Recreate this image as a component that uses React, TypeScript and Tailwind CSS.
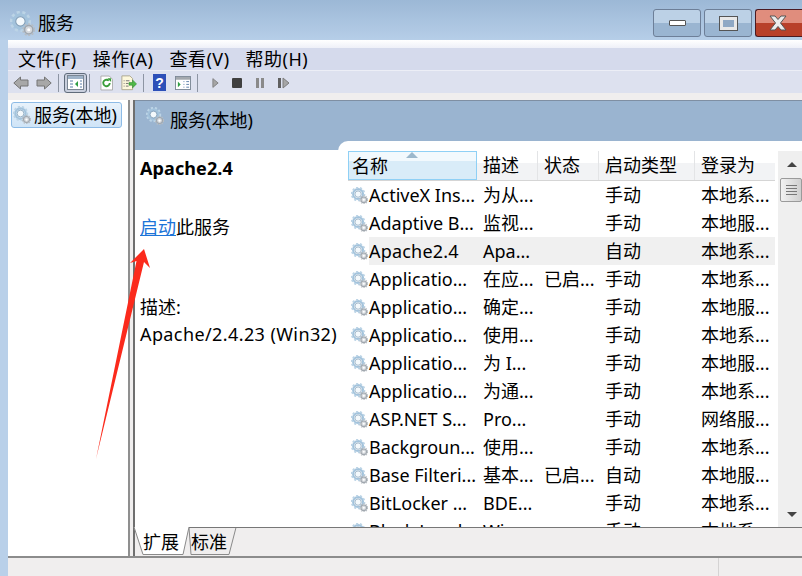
import React from 'react';

const rows = [
	['ActiveX Ins...', '为从...', '', '手动', '本地系...'],
	['Adaptive B...', '监视...', '', '手动', '本地服...'],
	['Apache2.4', 'Apa...', '', '自动', '本地系...'],
	['Applicatio...', '在应...', '已启...', '手动', '本地系...'],
	['Applicatio...', '确定...', '', '手动', '本地服...'],
	['Applicatio...', '使用...', '', '手动', '本地系...'],
	['Applicatio...', '为 I...', '', '手动', '本地服...'],
	['Applicatio...', '为通...', '', '手动', '本地系...'],
	['ASP.NET S...', 'Pro...', '', '手动', '网络服...'],
	['Backgroun...', '使用...', '', '手动', '本地系...'],
	['Base Filteri...', '基本...', '已启...', '自动', '本地服...'],
	['BitLocker ...', 'BDE...', '', '手动', '本地系...'],
	['Block Level...', 'Wi...', '', '手动', '本地系...'],
];

const Gear: React.FC<{ size?: number }> = ({ size = 18 }) => (
	<svg width={size} height={size} viewBox="0 0 24 24" className="shrink-0">
		<circle cx="10" cy="10" r="7" fill="none" stroke="#a3c3dc" strokeWidth="3" />
		<circle cx="10" cy="10" r="9" fill="none" stroke="#bcd4e6" strokeWidth="2.5" strokeDasharray="3 2.5" />
		<circle cx="10" cy="10" r="4.5" fill="#f4f9fc" stroke="#7f9db5" strokeWidth="1" />
		<circle cx="18" cy="18" r="4" fill="#d4d8dd" stroke="#a0a7ae" strokeWidth="1.5" />
		<circle cx="18" cy="18" r="5.5" fill="none" stroke="#b7bdc3" strokeWidth="1.5" strokeDasharray="2 1.5" />
		<circle cx="18" cy="18" r="1.5" fill="#fff" />
	</svg>
);

const Toolbar = () => (
	<div className="flex h-[23px] shrink-0 items-center border-t border-[#eceef6] bg-[#dde1ef] pl-[5px] pt-px">
		<svg width="16" height="14" viewBox="0 0 16 14">
			<path d="M.8 7 7.500 1v3h7.500v6H7.500v3z" fill="#a8a8a8" stroke="#757575" />
		</svg>
		<svg width="16" height="14" viewBox="0 0 16 14" className="ml-[7px]">
			<path d="M15.200 7 8.500 1v3H1v6h7.500v3z" fill="#a8a8a8" stroke="#757575" />
		</svg>
		<div className="ml-[6px] h-[18px] w-px bg-[#8d95a3]" />
		<div className="ml-[5px] flex h-[20px] w-[23px] items-center justify-center rounded-[3px] border border-[#5f6b7a] bg-[#c9cfdd]">
			<svg width="17" height="15" viewBox="0 0 17 15">
				<rect x="0.5" y="0.5" width="16" height="14" fill="#fff" stroke="#7b8794" />
				<rect x="1" y="1" width="15" height="3" fill="#9fb3c8" />
				<path d="M3 6h3M3 9h3M3 12h3M13 6h2M13 9h2M13 12h2" stroke="#5a7fa8" />
				<path d="M11 6v6L8 9z" fill="#2f9e44" />
			</svg>
		</div>
		<div className="ml-[2px] h-[18px] w-px bg-[#8d95a3]" />
		<svg width="13" height="16" viewBox="0 0 14 16" className="ml-[10px]">
			<path d="M1 .5h9l3.500 3.500v11.500H1z" fill="#fff" stroke="#a9a9a9" />
			<path d="M10.500 8a3.500 3.500 0 1 1-1-2.500" fill="none" stroke="#3a9d3a" strokeWidth="2" />
			<path d="M8 3h4v4z" fill="#3a9d3a" />
		</svg>
		<svg width="16" height="16" viewBox="0 0 18 17" className="ml-[8px]">
			<path d="M1 .5h9l3 3v12.500H1z" fill="#fdf8dc" stroke="#a9a48a" />
			<path d="M3 6h1M3 9h1M3 12h1M5.500 6h4M5.500 9h3M5.500 12h3" stroke="#666" />
			<path d="M9 8h4V5l4.500 4.500L13 14v-3H9z" fill="#4fb848" stroke="#2d8a2d" strokeWidth=".6" />
		</svg>
		<div className="ml-[6px] h-[18px] w-px bg-[#8d95a3]" />
		<div className="ml-[9px] flex h-[17px] w-[13px] items-center justify-center bg-[#2d50b8] font-['Liberation_Sans',sans-serif] text-[14px] font-bold leading-none text-white">?</div>
		<svg width="16" height="14" viewBox="0 0 17 15" className="ml-[9px]">
			<rect x="0.5" y="0.5" width="16" height="14" fill="#fff" stroke="#7b8794" />
			<rect x="1" y="1" width="15" height="3" fill="#a3a8ae" />
			<path d="M3 6v6l3-3z" fill="#2f9e44" />
			<path d="M9 6h1M9 9h1M9 12h1M12 6h3M12 9h3M12 12h3" stroke="#5a7fa8" />
		</svg>
		<div className="ml-[6px] h-[18px] w-px bg-[#8d95a3]" />
		<svg width="7" height="12" viewBox="0 0 8 12" className="ml-[14px]">
			<path d="M1 1v10l6-5z" fill="#a6a6a6" stroke="#7d7d7d" />
		</svg>
		<div className="ml-[13px] h-[10px] w-[10px] rounded-[1px] bg-[#404040]" />
		<div className="ml-[14px] flex gap-[2px]">
			<div className="h-[10px] w-[3px] bg-[#8a8a8a]" />
			<div className="h-[10px] w-[3px] bg-[#8a8a8a]" />
		</div>
		<div className="ml-[14px] flex items-center gap-[1px]">
			<div className="h-[10px] w-[3px] bg-[#606060]" />
			<svg width="8" height="12" viewBox="0 0 8 12">
				<path d="M1 1v10l6-5z" fill="#a6a6a6" stroke="#7d7d7d" />
			</svg>
		</div>
	</div>
);

const App: React.FC = () => {
	return (
		<div className="relative flex h-[576px] w-[802px] flex-col overflow-hidden bg-[#b9d0e9] font-['Noto_Sans','Noto_Sans_CJK_SC',sans-serif] text-[18px] leading-[24px] text-black">
			{/* title bar */}
			<div className="flex h-[40px] shrink-0 items-center bg-gradient-to-b from-[#9cb8d6] to-[#b6cee8] pl-[10px] pt-[6px]">
				<Gear size={25} />
				<span className="ml-[3px]">服务</span>
				<div className="ml-auto flex items-start gap-[3px] self-start pt-[3px]">
					<div className="flex h-[28px] w-[48px] items-center justify-center rounded-[3px] border border-[#6d7f98] bg-[linear-gradient(#bcd1e6_50%,#9ab5d1_50%)]">
						<div className="h-[6px] w-[17px] rounded-[1px] border border-[#555] bg-white" />
					</div>
					<div className="flex h-[28px] w-[48px] items-center justify-center rounded-[3px] border border-[#6d7f98] bg-[linear-gradient(#bcd1e6_50%,#9ab5d1_50%)]">
						<div className="h-[13px] w-[17px] border-[3px] border-[#e8e8e8] bg-[#8fa8c4] outline outline-1 outline-[#555]" />
					</div>
					<div className="flex h-[28px] w-[47px] items-center justify-center rounded-l-[3px] border border-r-0 border-[#4a1a22] bg-[linear-gradient(#e08d7d_50%,#b8402a_50%)]">
						<svg width="18" height="16" viewBox="0 0 18 16" className="-ml-[2px]">
							<path d="M1 1h5l3 3.500L12 1h5l-5.500 7L17 15h-5l-3-3.500L6 15H1l5.500-7z" fill="#ececec" stroke="#555" strokeWidth="1" />
						</svg>
					</div>
				</div>
			</div>

			<div className="ml-[8px] flex min-h-0 flex-1 flex-col">
				{/* menu */}
				<div className="h-[8px] shrink-0 bg-gradient-to-b from-white to-[#eef0f8]" />
				<div className="flex h-[22px] shrink-0 items-center gap-[16px] bg-[#d5daec] pl-[10px] tracking-[0.5px]">
					<span>文件(F)</span>
					<span>操作(A)</span>
					<span>查看(V)</span>
					<span>帮助(H)</span>
				</div>
				<Toolbar />
				<div className="h-[7px] shrink-0 bg-[#f0eeee]" />

				<div className="flex min-h-0 flex-1 border-b-2 border-[#8c8c8c]">
					{/* tree */}
					<div className="w-[122px] shrink-0 border-r-2 border-[#8f8f8f] bg-white pl-[3px] pt-[2px]">
						<div className="flex h-[26px] w-[111px] items-center rounded-[3px] border border-[#8dbbe6] bg-gradient-to-b from-[#e8f2fb] to-[#cfe4f7] pl-[1px]">
							<Gear size={18} />
							<span className="ml-[3px] whitespace-nowrap">服务(本地)</span>
						</div>
					</div>
					<div className="w-[3px] shrink-0 bg-[#f0eeee]" />

					{/* details */}
					<div className="flex min-w-0 flex-1 flex-col border-l-2 border-[#6f6f6f] bg-[#f0eeee]">
						<div className="flex min-h-0 flex-1 flex-col bg-white">
							<div className="flex h-[50px] shrink-0 items-start border-t border-[#7f8fa3] bg-[#9ab4d0] pl-[11px] pt-[6px]">
								<Gear size={18} />
								<span className="ml-[6px] pt-px">服务(本地)</span>
							</div>
							<div className="flex min-h-0 flex-1">
								<div className="w-[204px] shrink-0 pl-[5px] pt-[6px]">
									<div className="font-bold tracking-[0.1px]">Apache2.4</div>
									<div className="mt-[35px]">
										<span className="text-[#1c74d8] underline">启动</span>此服务
									</div>
									<div className="mt-[56px]">描述:</div>
									<div className="mt-[3px] whitespace-nowrap tracking-[0.4px]">Apache/2.4.23 (Win32)</div>
								</div>
								<div className="relative z-10 -mt-[9px] -ml-px flex min-w-0 flex-1 rounded-tl-[10px] bg-white pl-[10px] pt-[10px]">
									<div className="min-w-0 flex-1 overflow-hidden">
										<div className="flex h-[30px] border-b border-[#d5d5d5] bg-[linear-gradient(#fff_40%,#f2f3f5_40%)]">
											<div className="relative w-[129px] border border-[#8fd0f5] bg-[linear-gradient(#f2f9fd_35%,#d9ecf8_35%)] pl-[3px] leading-[28px]">
												名称
												<div className="absolute left-[57px] top-0 h-0 w-0 border-x-[6px] border-b-[6px] border-x-transparent border-b-[#9cb8cc]" />
											</div>
											<div className="w-[61px] border-r border-[#e3e4e6] pl-[6px] leading-[29px]">描述</div>
											<div className="w-[61px] border-r border-[#e3e4e6] pl-[6px] leading-[29px]">状态</div>
											<div className="w-[96px] border-r border-[#e3e4e6] pl-[6px] leading-[29px]">启动类型</div>
											<div className="flex-1 pl-[6px] leading-[29px]">登录为</div>
										</div>
										{rows.map((r, i) => (
											<div key={i} className="flex h-[28px] items-center whitespace-nowrap">
												<div className="flex w-[129px] shrink-0 items-center pl-[3px]">
													<Gear size={17} />
													<span className={i === 2 ? 'ml-[1px] h-[28px] flex-1 bg-[#f0f0f0] leading-[28px] tracking-[0.2px]' : 'ml-[1px]'}>{r[0]}</span>
												</div>
												<div className={i === 2 ? 'flex h-[28px] w-[298px] items-center bg-[#f0f0f0]' : 'flex h-[28px] w-[298px] items-center'}>
													<div className="w-[61px] pl-[6px]">{r[1]}</div>
													<div className="w-[61px] pl-[6px]">{r[2]}</div>
													<div className="w-[96px] pl-[6px]">{r[3]}</div>
													<div className="pl-[6px]">{r[4]}</div>
												</div>
											</div>
										))}
									</div>
									<div className="ml-[3px] flex w-[24px] shrink-0 flex-col items-center bg-[#efefef]">
										<div className="ml-[4px] mt-[11px] h-0 w-0 border-x-[5px] border-b-[5px] border-x-transparent border-b-[#444]" />
										<div className="ml-[2px] mt-[11px] flex h-[24px] w-[22px] flex-col items-center justify-center gap-[2px] rounded-[2px] border border-[#9a9a9a] bg-gradient-to-r from-[#f2f2f2] to-[#cfcfcf]">
											<div className="h-px w-[11px] bg-[#777]" />
											<div className="h-px w-[11px] bg-[#777]" />
											<div className="h-px w-[11px] bg-[#777]" />
											<div className="h-px w-[11px] bg-[#777]" />
										</div>
										<div className="mb-[10px] ml-[3px] mt-auto h-0 w-0 border-x-[5px] border-t-[5px] border-x-transparent border-t-[#444]" />
									</div>
								</div>
							</div>
						</div>

						{/* tabs */}
						<div className="relative flex h-[29px] shrink-0 items-center bg-[#f0eeee] pl-[8px] pt-px">
							<svg width="668" height="29" viewBox="0 0 668 29" className="absolute left-0 top-0 overflow-visible">
								<path d="M54 .5 56 27.500H94L101 .5z" fill="#f0eeee" stroke="#8a8a8a" />
								<path d="M-1 0 8 27.500H48L54 0z" fill="#fff" />
								<path d="M-1 0 8 27.500H48L54 0" fill="none" stroke="#8a8a8a" />
								<path d="M54 .5H668" stroke="#777" />
							</svg>
							<span className="relative">扩展</span>
							<span className="relative ml-[12px]">标准</span>
						</div>
					</div>
				</div>

				{/* status bar */}
				<div className="flex h-[18px] shrink-0 bg-[#f0eeee]">
					<div className="w-[711px] border-r border-[#d5d3d3]" />
				</div>
			</div>

			{/* red annotation arrow */}
			<svg width="802" height="576" viewBox="0 0 802 576" className="pointer-events-none absolute left-0 top-0 z-20">
				<path d="M144 249 150 268 144 262 96 459 136.500 261 130 263z" fill="#fb2a1c" />
			</svg>
		</div>
	);
};

export default App;
